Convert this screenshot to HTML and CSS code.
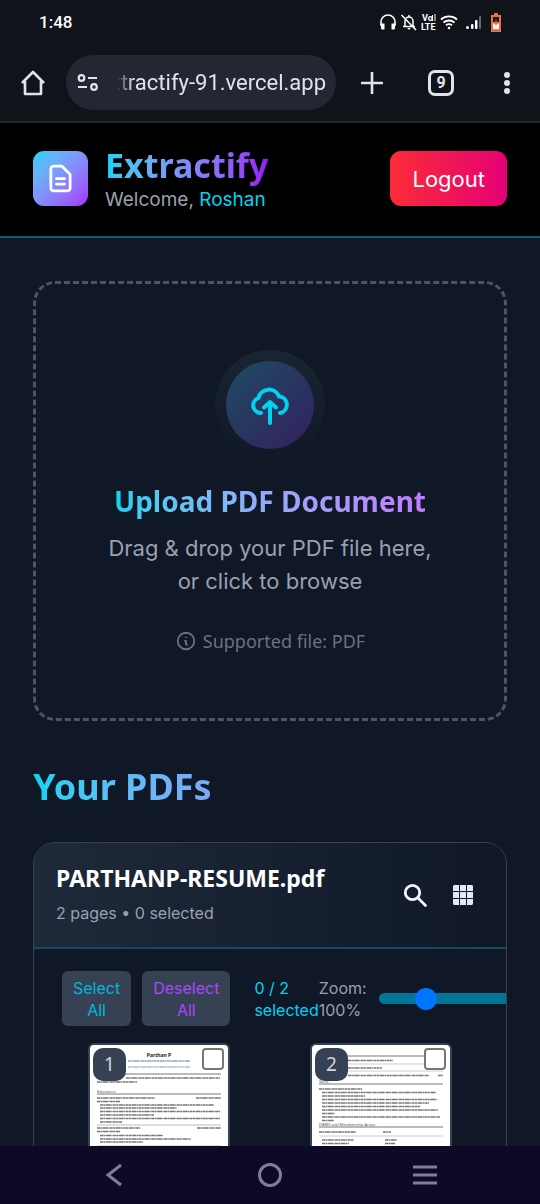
FILE: index.html
```html
<!DOCTYPE html>
<html lang="en">
<head>
<meta charset="utf-8">
<meta name="viewport" content="width=device-width, initial-scale=1">
<title>Extractify</title>
<link rel="stylesheet" href="styles.css">
</head>
<body>
<div class="phone">
  <div class="status">
    <span class="time">1:48</span>
    <div class="status-icons">
      <svg width="18" height="18" viewBox="0 0 18 18" fill="none" stroke="#fff" stroke-width="1.6"><path d="M2 13V9a7 7 0 0 1 14 0v4"/><path d="M2 10.500h3.500v6H3.500A1.500 1.500 0 0 1 2 15zM16 10.500h-3.500v6h2A1.500 1.500 0 0 0 16 15z" fill="#fff" stroke="none"/></svg>
      <svg width="18" height="18" viewBox="0 0 18 18" fill="none" stroke="#fff" stroke-width="1.500"><path d="M5 13.500V8a4 4 0 0 1 8 0v5.500M3 13.500h12M9 2v2M1.500 2l14.500 15"/><path d="M7.500 15h3a1.500 1.500 0 0 1-3 0z" fill="#fff" stroke="none"/></svg>
      <svg width="16" height="18" viewBox="0 0 16 18" role="img" aria-label="VoLTE"><text class="volte" x="1" y="8">Vo</text><path d="M11.500 2v6M14 1v7" stroke="#fff" fill="none"/><text class="volte" x="0" y="17">LTE</text></svg>
      <svg width="18" height="18" viewBox="0 0 18 18" fill="none" stroke="#fff" stroke-width="1.800"><path d="M1 6.500a12 12 0 0 1 16 0M3.500 9.500a8.500 8.500 0 0 1 11 0M6 12.300a5 5 0 0 1 6 0"/><circle cx="9" cy="15" r="1.300" fill="#fff" stroke="none"/></svg>
      <svg class="signal" width="18" height="18" viewBox="0 0 18 18" fill="#fff"><circle cx="2.500" cy="14.500" r="1.500"/><rect x="6" y="11" width="2.500" height="5" rx="1"/><rect x="10" y="7" width="2.500" height="9" rx="1"/><rect x="14" y="3" width="2" height="13" rx="1" fill="#666973"/></svg>
      <svg class="battery" width="12" height="19" viewBox="0 0 12 19"><path d="M4 0h4v2h3v17H1V2h3z" fill="#e9704d"/><path d="M3 4h6v5H3z" fill="#24191c"/><path d="M3 10l3 2 3-2v6H3z" fill="#fff"/><path d="M6 7v5M4 10h4" stroke="#e9704d"/></svg>
    </div>
  </div>

  <div class="browser">
    <button class="icon-button" aria-label="Home"><svg width="28" height="28" viewBox="0 0 28 28" fill="none" stroke="#e3e2ec" stroke-width="2.600" stroke-linejoin="round"><path d="M3 14L14 3l11 11M6 12v13h16V12"/></svg></button>
    <div class="address">
      <svg width="22" height="20" viewBox="0 0 22 20" fill="none" stroke="#e3e2ec" stroke-width="2.200"><circle cx="4.500" cy="5" r="2.800"/><path d="M11 5h9M1 14h9"/><circle cx="17" cy="14" r="2.800"/></svg>
      <input class="url" aria-label="Address" value="xtractify-91.vercel.app">
    </div>
    <div class="browser-actions">
      <button class="icon-button" aria-label="New tab"><svg width="24" height="24" viewBox="0 0 24 24" stroke="#e3e2ec" stroke-width="2.600"><path d="M12 1v22M1 12h22"/></svg></button>
      <button class="tabs">9</button>
      <button class="icon-button dots" aria-label="Menu"><svg width="8" height="24" viewBox="0 0 8 24" fill="#e3e2ec"><circle cx="4" cy="4" r="3"/><circle cx="4" cy="12" r="3"/><circle cx="4" cy="20" r="3"/></svg></button>
    </div>
  </div>

  <header class="header">
    <div class="logo"><svg width="33" height="33" viewBox="0 0 24 24" fill="none" stroke="#fff" stroke-width="2" stroke-linecap="round" stroke-linejoin="round"><path d="M9 12h6m-6 4h6m2 5H7a2 2 0 0 1-2-2V5a2 2 0 0 1 2-2h5.586a1 1 0 0 1 .707.293l5.414 5.414a1 1 0 0 1 .293.707V19a2 2 0 0 1-2 2z"/></svg></div>
    <div class="brand">
      <h1 class="brand-name">Extractify</h1>
      <p class="welcome">Welcome, <span class="user">Roshan</span></p>
    </div>
    <button class="logout">Logout</button>
  </header>

  <main class="main">
    <section class="drop">
      <div class="halo"><div class="disc"><svg width="48" height="48" viewBox="0 0 24 24" fill="none" stroke="#00d3f2" stroke-width="2" stroke-linecap="round" stroke-linejoin="round"><path d="M7.500 16A3.800 3.800 0 0 1 6.200 8.600 5.400 5.400 0 0 1 16.500 7.700h.2A4.200 4.200 0 0 1 17 16M12 21V11M9 13.200l3-2.700 3 2.700"/></svg></div></div>
      <h2 class="drop-title">Upload PDF Document</h2>
      <p class="drop-text">Drag &amp; drop your PDF file here,<br>or click to browse</p>
      <p class="supported"><svg width="22" height="22" viewBox="0 0 24 24" fill="none" stroke="currentColor" stroke-width="2" stroke-linecap="round" stroke-linejoin="round"><path d="M13 16h-1v-4h-1m1-4h.01M21 12a9 9 0 1 1-18 0 9 9 0 0 1 18 0z"/></svg><span>Supported file: PDF</span></p>
    </section>

    <h2 class="section-title">Your PDFs</h2>

    <section class="card">
      <div class="card-head">
        <div class="file">
          <h3 class="file-name">PARTHANP-RESUME.pdf</h3>
          <p class="file-info">2 pages • 0 selected</p>
        </div>
        <button class="icon-button" aria-label="Search"><svg width="26" height="26" viewBox="0 0 26 26" fill="none" stroke="#f3f4f6" stroke-width="2.800" stroke-linecap="round"><circle cx="10.500" cy="10.500" r="7.200"/><path d="M16 16l7.500 7.500"/></svg></button>
        <button class="icon-button grid-button" aria-label="Grid view"><svg width="20" height="20" viewBox="0 0 20 20" fill="#e5e7f0"><path d="M1 0h5v6H0V1zM7 0h6v6H7zM14 0h5l1 1v5h-6zM0 7h6v6H0zM7 7h6v6H7zM14 7h6v6h-6zM0 14h6v6H1l-1-1zM7 14h6v6H7zM14 14h6v5l-1 1h-5z"/></svg></button>
      </div>
      <div class="tools">
        <button class="tool select">Select<br>All</button>
        <button class="tool deselect">Deselect<br>All</button>
        <span class="count">0 / 2<br>selected</span>
        <label class="zoom" for="zoom">Zoom:<br>100%</label>
        <input class="slider" id="zoom" type="range" min="50" max="200" value="100">
      </div>
      <div class="pages">
        <div class="page">
          <svg class="sheet" viewBox="0 0 138 195" fill="none">
            <text class="doc-name" x="69" y="12">Parthan P</text>
            <g class="fine"><path d="M38 16h62" stroke="#8fa4b8"/><path d="M38 22h62" stroke="#a9bfd3"/><path d="M36 33h94M7 37h40M7 53h58M106 53h25M7 56.500h23M10 60h114M10 63h77M10 66.500h120M10 70h54M10 73.500h120M10 77h22M7 83h43M107 83h24M7 86.500h23M10 90.500h63M10 94h91M10 97h43"/></g>
            <path d="M7 29h124M7 49h124" stroke="#777"/><path d="M7 80h124M7 101h124" stroke="#bbb"/>
            <text class="doc-head" x="7" y="48">Education</text>
          </svg>
          <span class="number">1</span><input class="check" type="checkbox" aria-label="Select page 1">
        </div>
        <div class="page">
          <svg class="sheet" viewBox="0 0 138 195" fill="none">
            <g class="fine"><path d="M36 15.500h45M36 23h34M36 30.500h81M126 30.500h5M7 44h43M10 47.500h114M10 51h43M10 54.500h115M10 58h107M10 61.500h98M10 65h116M10 68.500h13M10 72h118M10 75.500h12M7 87h37M71 87h8M10 95h32M73 95h12M10 98.500h27M73 98.500h10M10 102h34M73 102h14"/></g>
            <path d="M30 11h90M7 39h124M7 82h124" stroke="#777"/><path d="M30 19h101M30 26h101M7 91h124" stroke="#ccc"/>
            <text class="doc-head" x="7" y="38">Skills</text><text class="doc-head" x="7" y="81">DBMS and Membership Areas</text>
          </svg>
          <span class="number">2</span><input class="check" type="checkbox" aria-label="Select page 2">
        </div>
      </div>
    </section>
  </main>

  <nav class="nav">
    <button class="icon-button" aria-label="Back"><svg width="28" height="28" viewBox="0 0 28 28" fill="none" stroke="#827d92" stroke-width="3"><path d="M20 4L7 14l13 10"/></svg></button>
    <button class="icon-button" aria-label="Home screen"><svg width="28" height="28" viewBox="0 0 28 28" fill="none" stroke="#827d92" stroke-width="3"><circle cx="14" cy="14" r="10.500"/></svg></button>
    <button class="icon-button" aria-label="Recent apps"><svg width="28" height="28" viewBox="0 0 28 28" stroke="#827d92" stroke-width="3"><path d="M2 6h24M2 14h24M2 22h24"/></svg></button>
  </nav>
</div>
</body>
</html>
```
FILE: styles.css
```css
* { box-sizing: border-box; }
body, h1, h2, h3, p { margin: 0; }
body { background: #101726; color: #fff; font-family: Inter, "Liberation Sans", sans-serif; }
button, input { font: inherit; margin: 0; }
svg { display: block; flex: none; }

.phone { display: flex; flex-direction: column; height: 100vh; overflow: hidden; }
.icon-button { display: flex; padding: 0; border: 0; background: none; }

.status { display: flex; flex: none; align-items: center; justify-content: space-between; height: 44px; padding: 0 38px 0 39px; background: #10131a; }
.time { font: 500 17px Roboto, sans-serif; }
.status-icons { display: flex; align-items: center; gap: 3px; }
.signal { margin-left: 4px; }
.battery { margin-left: 4px; }
.volte { font: 700 9px Roboto, sans-serif; fill: #fff; }

.browser { display: flex; flex: none; align-items: center; height: 79px; padding: 0 29px 0 19px; border-bottom: 2px solid #24252e; background: #10131a; }
.address { display: flex; flex: 1; align-items: center; gap: 10px; min-width: 0; height: 55px; margin-left: 19px; padding: 0 10px 0 11px; border-radius: 28px; background: #242632; }
.url { flex: 1; min-width: 0; padding: 0; border: 0; outline: 0; background: none; color: #e3e2ec; font: 400 22px/32px Roboto, sans-serif; text-align: right; -webkit-mask-image: linear-gradient(90deg, transparent 8px, #000 24px); mask-image: linear-gradient(90deg, transparent 8px, #000 24px); }
.browser-actions { display: flex; align-items: center; gap: 44px; margin-left: 24px; }
.dots { margin-left: 5px; }
.tabs { width: 26px; height: 26px; padding: 0; border: 3px solid #e3e2ec; border-radius: 7px; background: none; color: #e3e2ec; font: 700 16px/20px Roboto, sans-serif; }

.header { display: flex; flex: none; align-items: center; height: 115px; padding: 0 33px 2px; border-bottom: 2px solid #0b5f6b; background: #000; }
.logo { display: grid; place-items: center; width: 55px; height: 55px; border-radius: 11px; background: linear-gradient(135deg in oklab, #00d3f2, #9f2bff); }
.brand { flex: 1; margin-left: 17px; }
.brand-name, .drop-title, .section-title { color: transparent; -webkit-background-clip: text; background-clip: text; font-family: "Noto Sans", sans-serif; font-weight: 700; }
.brand-name { width: max-content; background-image: linear-gradient(90deg in oklab, #00d3f2, #9810fa); font-size: 34px; line-height: 42px; }
.welcome { color: #99a1af; font-size: 19px; line-height: 28px; }
.user { color: #00d3f2; }
.logout { height: 55px; padding: 0 22px; border: 0; border-radius: 11px; background: linear-gradient(90deg, #fb2c36, #e60076); color: #fff; font-size: 22px; }

.main { flex: 1; min-height: 0; overflow: hidden; padding: 43px 33px 0; }
.drop { display: flex; flex-direction: column; align-items: center; height: 440px; padding-top: 66px; border: 3px dashed #4a5565; border-radius: 22px; text-align: center; }
.halo { display: grid; place-items: center; width: 110px; height: 110px; border-radius: 50%; background: linear-gradient(180deg, #192532, #101827); }
.disc { display: grid; place-items: center; width: 88px; height: 88px; border-radius: 50%; background: linear-gradient(135deg, #1e4b61, #33205f); }
.drop-title { margin-top: 21px; background-image: linear-gradient(90deg in oklab, #00d3f2, #c27aff); font-size: 28px; line-height: 40px; }
.drop-text { margin-top: 11px; color: #99a1af; font-size: 22px; line-height: 33px; }
.supported { display: flex; align-items: center; gap: 6px; margin-top: 29px; color: #6a7282; font: 400 18px/28px "Noto Sans", sans-serif; }
.section-title { margin-top: 44px; background-image: linear-gradient(90deg in oklab, #00d3f2, #ad46ff); font-size: 36px; line-height: 44px; }

.card { margin-top: 33px; border: 1px solid #364153; border-radius: 22px 22px 0 0; overflow: hidden; }
.card-head { display: flex; align-items: center; height: 106px; padding: 0 33px 0 22px; border-bottom: 2px solid #104e5e; background: linear-gradient(90deg, #1e2939, #101828); }
.file { flex: 1; }
.file-name { font: 700 23px/36px "Noto Sans", sans-serif; }
.file-info { color: #99a1af; font-size: 16px; line-height: 34px; }
.grid-button { margin-left: 25px; }
.tools { display: flex; align-items: center; padding: 22px 0 0 28px; color: #99a1af; font-size: 16px; line-height: 22px; }
.tool { flex: none; height: 55px; padding: 0 11px; border: 0; border-radius: 6px; background: #364153; }
.select { color: #00b8db; }
.deselect { margin-left: 11px; color: #ad46ff; }
.count { margin-left: 24px; color: #00d3f2; }
.zoom { flex: none; }
.slider { flex: none; width: 132px; height: 11px; margin-left: 12px; border-radius: 6px; background: #007595; -webkit-appearance: none; appearance: none; }
.slider::-webkit-slider-thumb { width: 22px; height: 22px; border-radius: 50%; background: #0075ff; -webkit-appearance: none; appearance: none; }

.pages { display: grid; grid-template-columns: 1fr 1fr; gap: 80px; padding: 17px 54px 0; }
.page { position: relative; border: 2px solid #364153; border-radius: 6px; background: #fff; overflow: hidden; }
.sheet { width: 100%; height: auto; }
.fine { stroke: #777; stroke-width: 1.4; stroke-dasharray: 3 .4 2 .5 5 .4 1 .5; }
.doc-name { fill: #222; font: 700 5px "Noto Sans", sans-serif; text-anchor: middle; }
.doc-head { fill: #555; font: 400 4px "Noto Sans", sans-serif; }
.number { position: absolute; top: 3px; left: 3px; width: 33px; height: 33px; border-radius: 10px; background: #364153; color: #d1d5dc; font: 400 19px/33px "Noto Sans", sans-serif; text-align: center; }
.check { position: absolute; top: 3px; right: 4px; width: 22px; height: 22px; border: 2px solid #767676; border-radius: 4px; background: #fff; -webkit-appearance: none; appearance: none; }

.nav { display: flex; flex: none; align-items: center; justify-content: space-between; height: 58px; padding: 0 101px; background: #0e0926; }
```
